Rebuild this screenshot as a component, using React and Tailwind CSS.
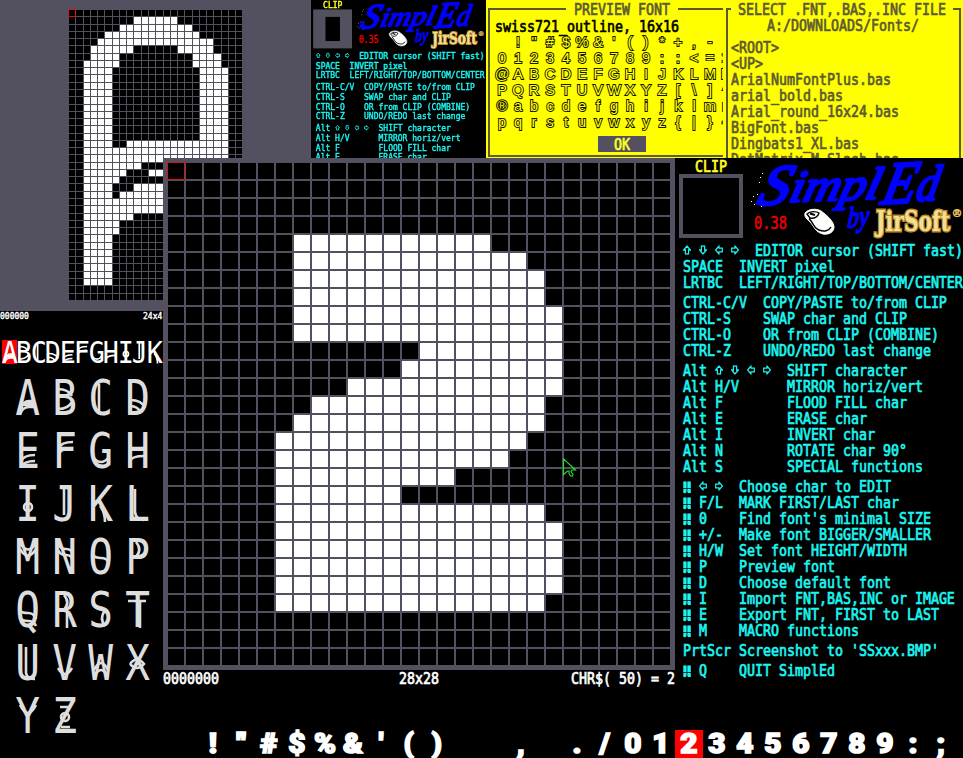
import React from "react";

const GRAY = "#53515f";

// Filled spans of the big "2" glyph: [row, first column, last column]
const TWO = [
  [4, 7, 17], [5, 7, 19], [6, 7, 20], [7, 7, 20], [8, 7, 21], [9, 7, 21],
  [10, 14, 21], [11, 13, 21], [12, 10, 21], [13, 8, 20], [14, 7, 20],
  [15, 6, 19], [16, 6, 18], [17, 6, 15], [18, 6, 12], [19, 6, 20],
  [20, 6, 21], [21, 6, 21], [22, 6, 21], [23, 6, 21], [24, 6, 20],
];

// Filled spans of the narrow art-deco "A" glyph
const DECO_A = [
  [1, 9, 14], [2, 7, 16], [3, 5, 17], [4, 4, 19], [5, 3, 8], [5, 15, 19],
  [6, 3, 6], [6, 17, 20], [7, 2, 6], [7, 17, 20],
  ...[8, 9, 10, 11, 12, 13, 14, 15, 16, 17].flatMap((r) => [[r, 2, 5], [r, 18, 21]]),
  [18, 2, 5], [18, 8, 21], [19, 2, 21], [20, 2, 21], [21, 2, 9], [22, 2, 7],
  [22, 11, 21], [23, 2, 6], [24, 2, 5], [24, 9, 21], [25, 2, 5], [25, 7, 21],
  [26, 2, 21], [27, 2, 21], [28, 2, 8], [29, 2, 6], [30, 2, 6],
  ...[31, 32, 33, 34, 35, 36, 37].map((r) => [r, 2, 5]),
];

function PixelGrid({ cols, rows, pitch, line, spans, cursor }) {
  const w = cols * pitch;
  const h = rows * pitch;
  return (
    <svg width={w} height={h} shapeRendering="crispEdges" className="block shrink-0 overflow-visible">
      <rect width={w} height={h} fill="#000" />
      {spans.map(([r, a, b], i) => (
        <rect key={i} x={a * pitch} y={r * pitch} width={(b - a + 1) * pitch} height={pitch} fill="#fff" />
      ))}
      {Array.from({ length: cols }, (_, i) => (
        <rect key={"v" + i} x={Math.round((i + 1) * pitch - line)} y="0" width={line} height={h} fill={GRAY} />
      ))}
      {Array.from({ length: rows }, (_, i) => (
        <rect key={"h" + i} x="0" y={Math.round((i + 1) * pitch - line)} width={w} height={line} fill={GRAY} />
      ))}
      <rect x="-0.5" y="-0.5" width={cursor} height={cursor} fill="none" stroke="#d01418" strokeWidth="1" />
    </svg>
  );
}

const ARROW_TURN = { "⇧": 0, "⇨": 90, "⇩": 180, "⇦": 270 };

function Symbol({ ch }) {
  if (ch === "‖") {
    return (
      <svg width="8" height="10" viewBox="0 0 8 10" preserveAspectRatio="none" className="inline-block align-[-0.5px]">
        <path d="M.3 0h3.300v5.800H.3zM4.300 0h3.500v5.800H4.300zM.3 6.500h3.300v1.900L2.800 10H.3zM4.300 6.500h3.500V10H4.800l-.5-1.400z" fill="currentColor" />
      </svg>
    );
  }
  return (
    <svg width="8" height="8" viewBox="0 0 8 8" className="inline-block align-[1px]">
      <path
        d="M4 .6L7.300 4H5.600v3.300H2.400V4H.7z"
        fill="none"
        stroke="currentColor"
        strokeWidth="1.2"
        transform={`rotate(${ARROW_TURN[ch]} 4 4)`}
      />
    </svg>
  );
}

function Line({ children, className = "" }) {
  const parts = children.split(/([⇧⇨⇩⇦‖])/);
  return (
    <div
      className={
        "h-4 shrink-0 scale-y-[1.19] whitespace-pre font-['DejaVu_Sans_Mono',monospace] text-[13.29px] leading-[17.4px] [-webkit-text-stroke:0.6px_currentColor] " +
        className
      }
    >
      {parts.map((p, i) => (p in ARROW_TURN || p === "‖" ? <Symbol key={i} ch={p} /> : p))}
    </div>
  );
}

const HELP = [
  [
    "⇧ ⇩ ⇦ ⇨  EDITOR cursor (SHIFT fast)",
    "SPACE  INVERT pixel",
    "LRTBC  LEFT/RIGHT/TOP/BOTTOM/CENTER",
  ],
  [
    "CTRL-C/V  COPY/PASTE to/from CLIP",
    "CTRL-S    SWAP char and CLIP",
    "CTRL-O    OR from CLIP (COMBINE)",
    "CTRL-Z    UNDO/REDO last change",
  ],
  [
    "Alt ⇧ ⇩ ⇦ ⇨  SHIFT character",
    "Alt H/V      MIRROR horiz/vert",
    "Alt F        FLOOD FILL char",
    "Alt E        ERASE char",
    "Alt I        INVERT char",
    "Alt N        ROTATE char 90°",
    "Alt S        SPECIAL functions",
  ],
  [
    "‖ ⇦ ⇨  Choose char to EDIT",
    "‖ F/L  MARK FIRST/LAST char",
    "‖ 0    Find font's minimal SIZE",
    "‖ +/-  Make font BIGGER/SMALLER",
    "‖ H/W  Set font HEIGHT/WIDTH",
    "‖ P    Preview font",
    "‖ D    Choose default font",
    "‖ I    Import FNT,BAS,INC or IMAGE",
    "‖ E    Export FNT, FIRST to LAST",
    "‖ M    MACRO functions",
  ],
  ["PrtScr Screenshot to 'SSxxx.BMP'"],
  ["‖ Q    QUIT SimplEd"],
];

function Logo({ version }) {
  return (
    <svg width="218" height="82" viewBox="745 158 218 82" className="block shrink-0">
      <g fill="#0000ff" stroke="#0000ff" strokeLinejoin="round" fontFamily="'Liberation Serif', serif" fontStyle="italic">
        <text transform="translate(756 205) rotate(-3) skewX(-20)" fontSize="56" strokeWidth="3" textLength="30" lengthAdjust="spacingAndGlyphs">S</text>
        <text transform="translate(788 202) rotate(-2) skewX(-16)" fontSize="45" strokeWidth="2.4" textLength="90" lengthAdjust="spacingAndGlyphs">impl</text>
        <text transform="translate(880 204) rotate(-3) skewX(-16)" fontSize="60" strokeWidth="3" textLength="33" lengthAdjust="spacingAndGlyphs">E</text>
        <text transform="translate(915 201) rotate(-3) skewX(-14)" fontSize="50" strokeWidth="2.4" textLength="22" lengthAdjust="spacingAndGlyphs">d</text>
        <text transform="translate(847 228) rotate(-8) skewX(-12)" fontSize="29" strokeWidth="1.6" textLength="22" lengthAdjust="spacingAndGlyphs">by</text>
      </g>
      <g fill="#fff">
        {[[760, 177], [759, 182], [762, 173], [753, 196], [751, 201], [757, 194], [754, 204], [761, 206]].map(([x, y]) => (
          <rect key={x + "-" + y} x={x} y={y} width="1" height="1" />
        ))}
      </g>
      <text x="754" y="228.500" fill="#f00000" stroke="#f00000" strokeWidth="0.5" fontFamily="'DejaVu Sans Mono', monospace" fontSize="18" textLength="33" lengthAdjust="spacingAndGlyphs">
        {version}
      </text>
      <g strokeLinejoin="round">
        <path d="M805 213c3-4 11-5 16-2 6 4 13 11 13 16 0 5-5 8-11 7-8-2-9-8-13-12-3-3-6-5-5-9z" fill="#fff" stroke="#fff" strokeWidth="1" />
        <path d="M807 214c3-3 9-3 12-1-1 4-5 6-9 5zM809 219c4 2 4 9 10 11 5 2 10 1 12-3" fill="none" stroke="#000" strokeWidth="1.4" />
        <path d="M810 213.500l5 1.500" stroke="#000" strokeWidth="2" />
      </g>
      <g fontFamily="'DejaVu Serif', serif" fontWeight="700">
        <text x="876" y="231" fontSize="27" fill="#f3df94" stroke="#b98a2c" strokeWidth="3" paintOrder="stroke" textLength="74" lengthAdjust="spacingAndGlyphs">JirSoft</text>
        <text x="951.500" y="217" fontSize="11" fill="#e8c45c" stroke="#e8c45c" strokeWidth="0.4">®</text>
      </g>
    </svg>
  );
}

function SidePanel({ version, filled }) {
  return (
    <div className="flex h-[530px] w-[288px] shrink-0 flex-col bg-black text-[#1cf6f2]">
      <div className="flex h-[84px]">
        <div className="flex w-[70px] flex-col">
          <Line className="pl-5 text-[#ffff20]">CLIP</Line>
          <div
            className={
              "ml-1 flex h-16 w-16 items-center justify-center border-4 border-[#53515f] " +
              (filled ? "bg-[#53515f]" : "bg-black")
            }
          >
            {filled && <div className="h-10 w-6 bg-black" />}
          </div>
        </div>
        <Logo version={version} />
      </div>
      <div className="flex flex-col gap-1 pl-2">
        {HELP.map((group, i) => (
          <div key={i} className="flex flex-col">
            {group.map((t) => (
              <Line key={t}>{t}</Line>
            ))}
          </div>
        ))}
      </div>
    </div>
  );
}

const PREVIEW = [" !\"#$%&'()*+,-.", "0123456789::<=>", "@ABCDEFGHIJKLMN", "PQRSTUVWXYZ[\\]^", "®abcdefghijklmn", "pqrstuvwxyz{|}~"];

function PreviewDialog() {
  return (
    <section className="flex h-[158px] w-[237px] shrink-0 flex-col overflow-hidden bg-[#ffff00] pl-0.5 text-[#5c5a35]">
      <div className="flex h-[18px] items-start">
        <div className="mt-2 h-[10px] w-[78px] border-l-2 border-t-2 border-current" />
        <Line className="mx-2 mt-[1px] text-[#5c5a35]">PREVIEW FONT</Line>
        <div className="mt-2 h-0.5 flex-1 bg-current" />
      </div>
      <div className="flex h-[139px] flex-col border-b-2 border-l-2 border-current">
        <Line className="pl-[5px] text-black">swiss721_outline, 16x16</Line>
        <div className="flex flex-col pl-1">
          {PREVIEW.map((row, r) => (
            <div key={r} className="flex h-4">
              {[...row].map((c, i) => (
                <span
                  key={i}
                  className="w-4 shrink-0 whitespace-pre text-center font-['Liberation_Sans',sans-serif] text-[14.5px] leading-4 text-[#ffff00] [-webkit-text-stroke:1.9px_#151500] [paint-order:stroke_fill]"
                >
                  {c}
                </span>
              ))}
            </div>
          ))}
        </div>
        <div className="ml-[108px] mt-[6px] flex h-4 w-12 justify-center bg-[#53515f]">
          <Line className="text-[#ffff20]">OK</Line>
        </div>
      </div>
    </section>
  );
}

const FILES = ["<ROOT>", "<UP>", "ArialNumFontPlus.bas", "arial_bold.bas", "Arial_round_16x24.bas", "BigFont.bas", "Dingbats1_XL.bas", "DotMatrix_M_Slash.bas"];

function FileDialog() {
  return (
    <section className="flex h-[158px] w-[240px] shrink-0 flex-col overflow-hidden bg-[#ffff00] pl-[3px] pr-0.5 text-[#5c5a35]">
      <div className="flex h-[18px] justify-between">
        <div className="mt-2 w-[5px] border-l-2 border-t-2 border-current" />
        <Line className="mt-[1px]">SELECT .FNT,.BAS,.INC FILE</Line>
        <div className="mt-2 w-2 border-r-2 border-t-2 border-current" />
      </div>
      <div className="flex flex-1 flex-col border-x-2 border-current">
        <Line className="pl-[39px]">A:/DOWNLOADS/Fonts/</Line>
        <div className="mt-[6px] flex flex-col pl-[3px]">
          {FILES.map((f) => (
            <Line key={f}>{f}</Line>
          ))}
        </div>
      </div>
    </section>
  );
}

// Inline ornaments laid over each letter, on a 20 x 36 box
const ORNAMENTS = {
  A: "M3 28Q5 20 11 20H16M2 34Q4 26 11 26H18",
  B: "M3 8Q13 8 17 15M3 28Q13 28 17 21",
  C: "M8 3V33",
  D: "M3 19Q15 19 18 27M3 25Q11 25 14 32",
  E: "M3 27Q6 21 17 21M3 33Q6 27 17 27",
  F: "M4 14Q6 8 18 8M4 20Q6 14 18 14",
  G: "M2 23Q10 33 18 23",
  H: "M3 27Q5 22 17 22",
  I: "M14 20a4 4 0 1 1-8 0 4 4 0 1 1 8 0",
  J: "M9 2V28",
  K: "M9 19Q14 25 14 35",
  L: "M8 2V25Q9 33 17 33",
  M: "M2 3Q10 16 18 3M2 9Q10 22 18 9",
  N: "M3 4Q5 9 11 9T17 14M3 10Q5 15 11 15T17 20",
  O: "M2 15Q4 18 10 18T18 23",
  P: "M9 2Q16 10 8 18",
  Q: "M2 18Q4 20 10 20T18 26M2 25Q4 28 10 28T18 33",
  R: "M9 2Q16 10 8 18M12 20V35",
  S: "M14 17Q8 26 14 33",
  T: "M1 8H19M13 8V35",
  U: "M8 1V27Q9 33 17 33",
  V: "M3 22Q10 34 17 22",
  W: "M3 24Q10 10 17 24M3 31Q10 17 17 31",
  X: "M3 18Q10 9 17 18Q10 26 3 18",
  Y: "M2 6Q10 22 18 6",
  Z: "M14 18a4 4 0 1 1-8 0 4 4 0 1 1 8 0M5 8H14M6 28H15",
};

function DecoLetter({ ch }) {
  return (
    <span className="grid place-items-center *:col-start-1 *:row-start-1">
      <span className="scale-x-[0.84] font-['DejaVu_Sans_Mono',monospace] text-[49px] leading-[53px]">{ch}</span>
      <svg width="20" height="36" viewBox="0 0 20 36">
        <path d={ORNAMENTS[ch]} fill="none" stroke="currentColor" strokeWidth="2.6" />
      </svg>
    </span>
  );
}

const ALPHABET = [..."ABCDEFGHIJKLMNOPQRSTUVWXYZ"];
const STRIP = [..."!\"#$%&'()", " ", " ", ",", " ", ".", "/", ..."0123456789:;"];

export default function App() {
  return (
    <div className="h-[758px] w-[963px] overflow-hidden bg-black">
      <header className="flex h-[158px]">
        <div className="h-[311px] w-[311px] shrink-0 bg-[#53515f] pl-[69px] pt-[10px]">
          <PixelGrid cols={24} rows={40} pitch={7.27} line={1} spans={DECO_A} cursor={7} />
        </div>
        <div className="h-[158px] w-[175px] shrink-0 overflow-hidden bg-black">
          <div className="origin-top-left scale-[0.603]">
            <SidePanel version="0.35" filled />
          </div>
        </div>
        <PreviewDialog />
        <FileDialog />
      </header>

      <main className="relative flex h-[572px]">
        <aside className="flex w-[163px] shrink-0 flex-col pt-[153px]">
          <div className="flex h-[10px] justify-between">
            <div className="origin-top-left scale-[0.603]">
              <Line className="w-12 text-white">000000</Line>
            </div>
            <div className="w-[20px]">
              <div className="origin-top-left scale-[0.603]">
                <Line className="text-white">24x4</Line>
              </div>
            </div>
          </div>
          <div className="mt-[19px] flex h-6 pl-[2px] text-white">
            {ALPHABET.slice(0, 11).map((c) => (
              <span
                key={c}
                className={"flex h-6 w-[14.5px] shrink-0 items-center justify-center " + (c === "A" ? "bg-[#ff0000]" : "")}
              >
                <span className="flex scale-x-[0.65] scale-y-[0.63]">
                  <DecoLetter ch={c} />
                </span>
              </span>
            ))}
          </div>
          <div className="ml-[10px] mt-[8px] grid w-[146px] grid-cols-[repeat(4,36.4px)] auto-rows-[53px] text-[#dedede]">
            {ALPHABET.map((c) => (
              <DecoLetter key={c} ch={c} />
            ))}
          </div>
        </aside>

        <section className="flex w-[512px] shrink-0 flex-col">
          <div className="relative h-[512px] w-[512px] border-[5px] border-[#53515f]">
            <PixelGrid cols={28} rows={28} pitch={18} line={2} spans={TWO} cursor={17} />
            <svg className="absolute left-[395px] top-[295px]" width="14" height="20" viewBox="0 0 14 20">
              <path d="M.5.8V16.500l4-3.500h1.500v2.500l1.500 2.500h2l.5-1.500-2-3 1-1.500h3.500z" fill="none" stroke="#25e02f" strokeWidth="1.1" />
            </svg>
          </div>
          <div className="flex justify-between text-white">
            <Line className="w-[104px]">0000000</Line>
            <Line>28x28</Line>
            <Line className="w-[104px]">CHR$( 50) = 2</Line>
          </div>
        </section>

        <SidePanel version="0.38" />
      </main>

      <footer className="flex h-7 pl-[199px] text-white">
        {STRIP.map((c, i) => (
          <span
            key={i}
            className={
              "flex w-7 shrink-0 items-center justify-center whitespace-pre font-['Roboto',sans-serif] text-[27px] font-black leading-7 [-webkit-text-stroke:1.6px_white] " +
              (c === "2" ? "bg-[#ff0000]" : "")
            }
          >
            <span className="scale-x-110">{c}</span>
          </span>
        ))}
      </footer>
    </div>
  );
}
